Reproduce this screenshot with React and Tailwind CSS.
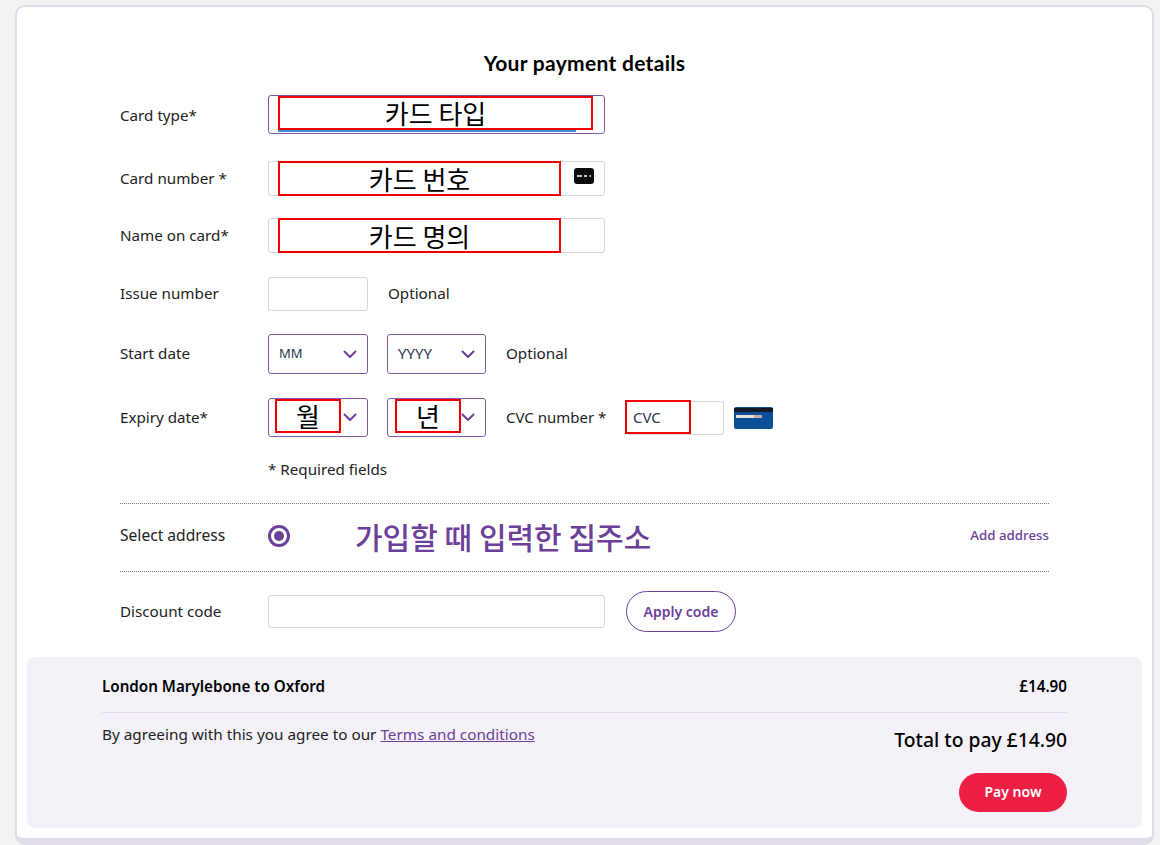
const LABEL = "w-[148px] shrink-0 text-[15.2px] text-[#222]";

const Chevron = () => (
  <svg width="14" height="9" viewBox="0 0 14 9" fill="none" className="shrink-0">
    <path d="M1.5 1.5 7 7l5.5-5.5" stroke="#6b4099" strokeWidth="2" strokeLinecap="round" strokeLinejoin="round" />
  </svg>
);

// red annotation drawn over the real field
const RedBox = ({ className, text }) => (
  <div
    className={`absolute flex items-center justify-center border-2 border-[#f40000] text-[26px] leading-none text-black [font-family:'Noto_Sans_CJK_KR',sans-serif] ${className}`}
  >
    {text}
  </div>
);

const Select = ({ width, text, textClass = "", children }) => (
  <div
    className={`relative flex h-full ${width} items-center justify-between rounded-[3px] border border-[#7f5aa8] pl-[10px] pr-[10px] text-[#2c3550]`}
  >
    <span className={`-mt-[1px] ${textClass}`}>{text}</span>
    <Chevron />
    {children}
  </div>
);

const CardIcon = () => (
  <svg width="20" height="16" viewBox="0 0 20 16" className="absolute left-[305px] top-[6px]">
    <rect x="0" y="0" width="20" height="16" rx="3" fill="#0a0a0a" />
    <path d="M3 8h5M10 8h3M15.5 8h1.5" stroke="#fff" strokeWidth="1.4" />
  </svg>
);

const BackOfCard = () => (
  <svg width="39" height="22" viewBox="0 0 39 22" className="ml-[10px] shrink-0">
    <rect width="39" height="22" rx="2" fill="#0d4f96" />
    <rect y="1" width="39" height="4" fill="#111a26" />
    <rect x="2" y="8" width="18" height="3" fill="#e8e4dc" />
    <rect x="20" y="8" width="8" height="3" fill="#c9a9b0" />
  </svg>
);

export default function App() {
  return (
    <div className="h-[845px] overflow-hidden bg-[#f3f3f3] pl-[15px] pr-[6px] pt-[5px] [font-family:'Noto_Sans',sans-serif]">
      <div className="h-[840px] rounded-[10px] border-2 border-b-[7px] border-[#e2dcea] bg-white pt-[44px]">
        <h1 className="h-[24px] text-center text-[21px] font-bold leading-[24px] tracking-[0.3px] text-black [font-family:'Lato',sans-serif]">
          Your payment details
        </h1>

        <div className="px-[103px]">
          <div className="mt-[20px] flex h-[39px] items-center">
            <div className={`${LABEL} pt-[2px]`}>Card type*</div>
            <div className="relative h-full w-[337px] rounded-[3px] border border-[#7f5aa8]">
              <div className="absolute left-[9px] top-[34px] h-[2px] w-[298px] bg-[#3b8fe0]" />
              <RedBox className="left-[9px] top-0 h-[34px] w-[315px]" text="카드 타입" />
            </div>
          </div>

          <div className="mt-[27px] flex h-[35px] items-center">
            <div className={LABEL}>Card number *</div>
            <div className="relative h-full w-[337px] rounded-[3px] border border-[#d6d6dc]">
              <RedBox className="left-[9px] top-[-1px] h-[35px] w-[283px]" text="카드 번호" />
              <CardIcon />
            </div>
          </div>

          <div className="mt-[22px] flex h-[35px] items-center">
            <div className={LABEL}>Name on card*</div>
            <div className="relative h-full w-[337px] rounded-[3px] border border-[#d6d6dc]">
              <RedBox className="left-[9px] top-[-1px] h-[35px] w-[283px]" text="카드 명의" />
            </div>
          </div>

          <div className="mt-[24px] flex h-[34px] items-center">
            <div className={`${LABEL} -mt-[2px]`}>Issue number</div>
            <div className="h-full w-[100px] rounded-[3px] border border-[#d6d6dc]" />
            <div className="ml-[20px] -mt-[2px] text-[15.2px] text-[#222]">Optional</div>
          </div>

          <div className="mt-[23px] flex h-[40px] items-center">
            <div className={`${LABEL} -mt-[1px]`}>Start date</div>
            <Select width="w-[100px]" text="MM" textClass="text-[13px]" />
            <div className="ml-[19px] h-full">
              <Select width="w-[99px]" text="YYYY" textClass="text-[15px]" />
            </div>
            <div className="ml-[20px] -mt-[1px] text-[15.2px] text-[#222]">Optional</div>
          </div>

          <div className="mt-[24px] flex h-[39px] items-center">
            <div className={LABEL}>Expiry date*</div>
            <Select width="w-[100px]">
              <RedBox className="left-[6px] top-0 h-[34px] w-[66px]" text="월" />
            </Select>
            <div className="ml-[19px] h-full">
              <Select width="w-[99px]">
                <RedBox className="left-[7px] top-0 h-[34px] w-[66px]" text="년" />
              </Select>
            </div>
            <div className="ml-[20px] w-[120px] shrink-0 text-[15px] text-[#222]">CVC number *</div>
            <div className="relative h-[34px] w-[98px] rounded-[3px] border border-[#d6d6dc]">
              <div className="absolute left-[-2px] top-[-2px] flex h-[34px] w-[66px] items-center border-2 border-[#f40000] pl-[6px] pt-[2px] text-[15px] text-[#2c3550]">
                CVC
              </div>
            </div>
            <BackOfCard />
          </div>

          <div className="mt-[22px] h-[20px] pl-[148px] text-[15.2px] leading-[20px] text-[#222]">* Required fields</div>

          <div className="mt-[24px] flex h-[69px] items-center border-y border-dotted border-[#77777c]">
            <div className={`${LABEL} -mt-[3px] text-[15.6px]`}>Select address</div>
            <div className="-mt-[3px] flex h-[22px] w-[22px] items-center justify-center rounded-full border-[3px] border-[#6b4099]">
              <div className="h-[10px] w-[10px] rounded-full bg-[#6b4099]" />
            </div>
            <div className="ml-[65px] -mt-[4px] text-[30px] font-medium leading-none text-[#6b4099] [font-family:'Noto_Sans_CJK_KR',sans-serif]">
              가입할 때 입력한 집주소
            </div>
            <div className="-mt-[3px] ml-auto text-[13.3px] font-medium text-[#6b4099]">Add address</div>
          </div>

          <div className="mt-[19px] flex h-[41px] items-center">
            <div className={LABEL}>Discount code</div>
            <div className="h-[33px] w-[337px] rounded-[3px] border border-[#d6d6dc]" />
            <button className="ml-[21px] h-full w-[110px] rounded-full border border-[#6b4099] text-[14px] font-semibold text-[#6b4099]">
              Apply code
            </button>
          </div>
        </div>

        <div className="mx-[10px] mt-[25px] h-[171px] rounded-[8px] bg-[#f4f2f8] px-[75px] pt-[20px]">
          <div className="flex h-[18px] items-center justify-between text-[15.2px] font-semibold text-black">
            <span>London Marylebone to Oxford</span>
            <span>£14.90</span>
          </div>
          <div className="mt-[17px] border-t border-[#e2dcea]" />
          <div className="mt-[11px] flex items-start justify-between">
            <div className="text-[15.3px] leading-[20px] text-[#222]">
              By agreeing with this you agree to our{" "}
              <a className="text-[#6b4099] underline">Terms and conditions</a>
            </div>
            <div className="mt-[1px] flex flex-col items-end">
              <div className="text-[19.3px] font-medium leading-[30px] text-black">Total to pay £14.90</div>
              <button className="mt-[18px] h-[39px] w-[108px] rounded-full bg-[#ee1f44] pb-[2px] text-[14px] font-semibold text-white">
                Pay now
              </button>
            </div>
          </div>
        </div>
      </div>
    </div>
  );
}
